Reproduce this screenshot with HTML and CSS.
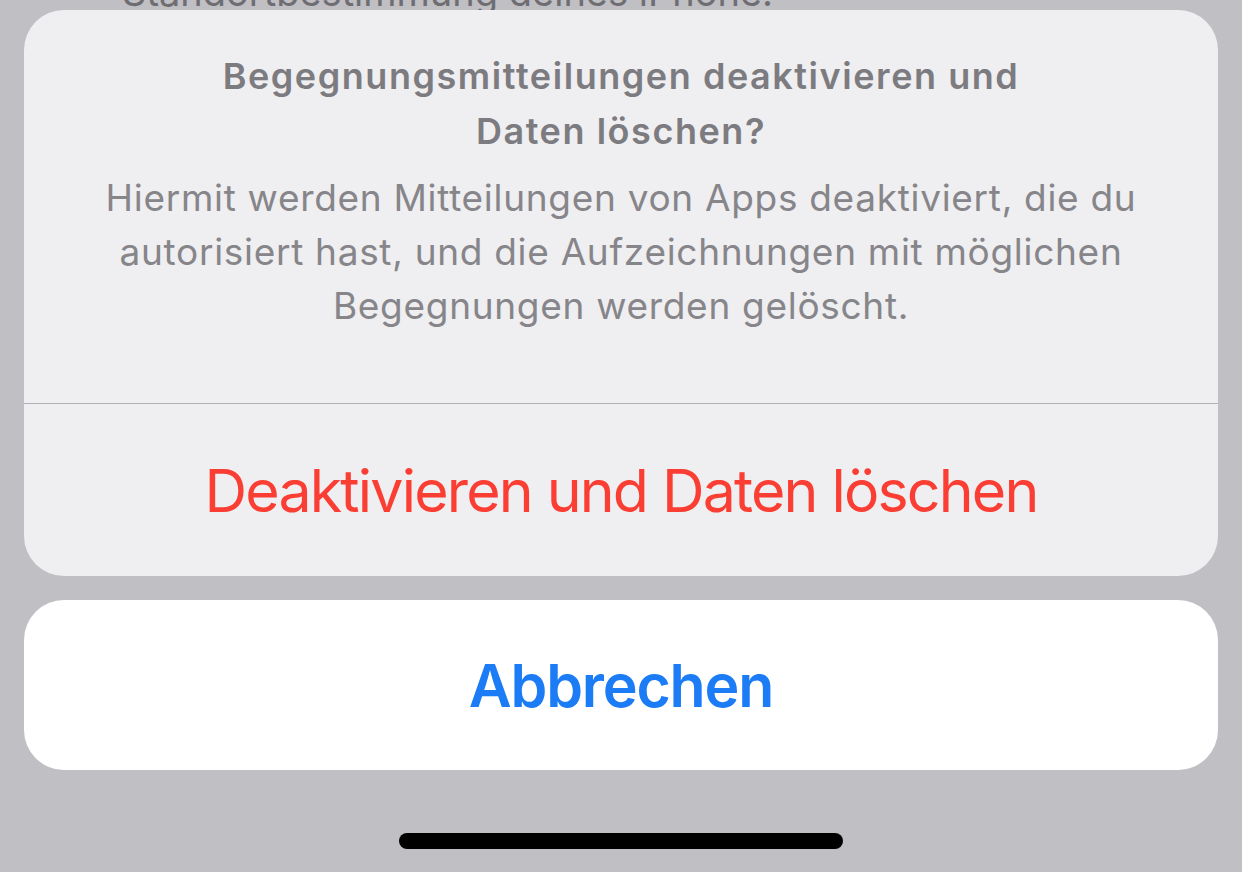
FILE: index.html
```html
<!DOCTYPE html>
<html lang="de">
<head>
<meta charset="utf-8">
<link rel="stylesheet" href="styles.css">
</head>
<body>
<div class="screen">
  <div class="behind">Standortbestimmung deines iPhone.</div>
  <div class="sheet">
    <div class="header">
      <div class="title">Begegnungsmitteilungen deaktivieren und<br>Daten löschen?</div>
      <div class="message">Hiermit werden Mitteilungen von Apps deaktiviert, die du<br>autorisiert hast, und die Aufzeichnungen mit möglichen<br>Begegnungen werden gelöscht.</div>
    </div>
    <div class="action destructive">Deaktivieren und Daten löschen</div>
  </div>
  <div class="cancel">Abbrechen</div>
  <div class="home-bar"><div class="home-indicator"></div></div>
</div>
</body>
</html>
```
FILE: styles.css
```css
html, body {
  margin: 0;
  padding: 0;
}
body {
  background: #c0bfc4;
  font-family: Inter, "Noto Sans", sans-serif;
  width: 1242px;
  height: 872px;
  overflow: hidden;
}
.screen {
  display: flex;
  flex-direction: column;
  align-items: center;
  padding: 0 24px;
}
.behind {
  align-self: flex-start;
  margin-top: -27px;
  height: 37px;
  overflow: hidden;
  padding-left: 98px;
  font-size: 38px;
  line-height: 38px;
  color: #6e6e72;
}
.sheet {
  width: 1194px;
  background: #efeef0;
  border-radius: 40px;
  display: flex;
  flex-direction: column;
}
.header {
  height: 394px;
  box-sizing: border-box;
  padding-top: 39px;
  border-bottom: 1px solid #b1b1b5;
  text-align: center;
}
.title {
  font-weight: 600;
  font-size: 36px;
  line-height: 55px;
  letter-spacing: 1.55px;
  color: #7c7b80;
}
.message {
  margin-top: 12px;
  font-size: 37px;
  line-height: 54px;
  letter-spacing: 0.7px;
  color: #86858a;
}
.action {
  height: 172px;
  display: flex;
  align-items: center;
  justify-content: center;
  font-size: 59px;
  letter-spacing: -1.8px;
}
.destructive {
  color: #fa3e33;
}
.cancel {
  margin-top: 24px;
  width: 1194px;
  height: 170px;
  background: #ffffff;
  border-radius: 40px;
  display: flex;
  align-items: center;
  justify-content: center;
  font-size: 59px;
  font-weight: 600;
  letter-spacing: -1.2px;
  color: #1b7cf6;
}
.home-bar {
  height: 103px;
  display: flex;
  align-items: flex-end;
  justify-content: center;
}
.home-indicator {
  width: 444px;
  height: 16px;
  border-radius: 8px;
  background: #000;
  margin-bottom: 24px;
}
```
